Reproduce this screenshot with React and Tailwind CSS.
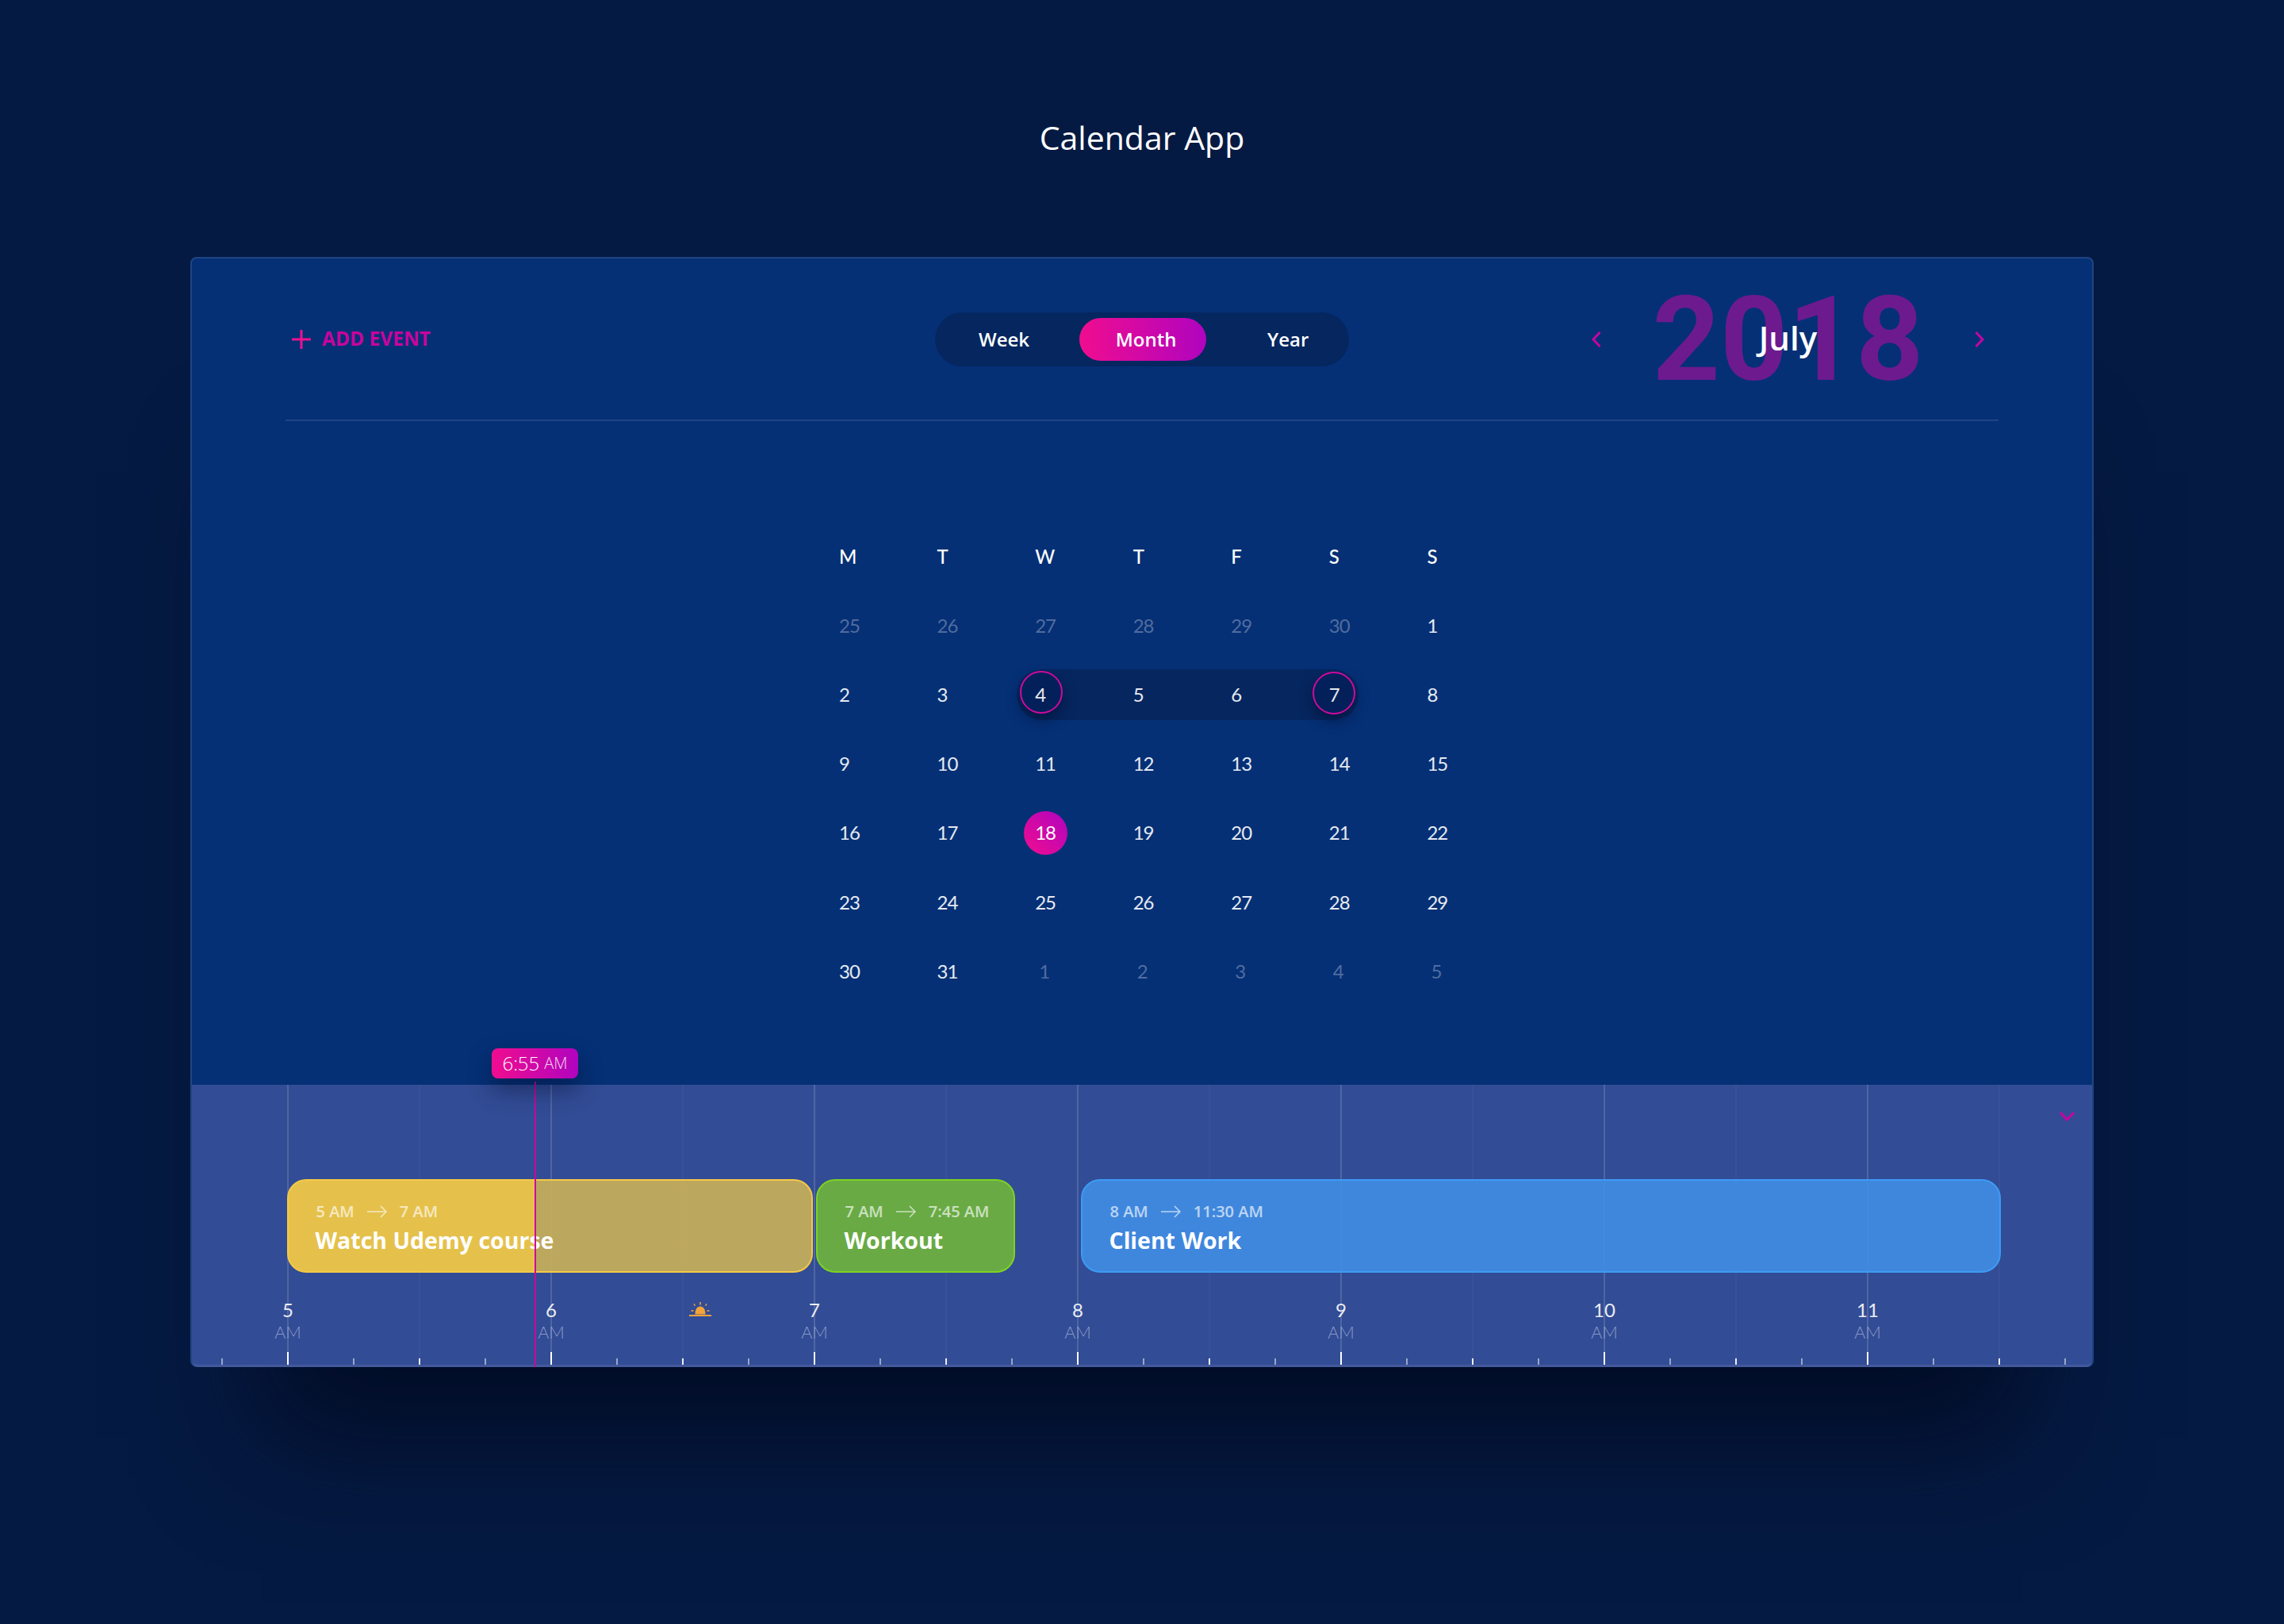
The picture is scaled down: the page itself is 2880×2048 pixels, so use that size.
const WEEKDAYS = ['M', 'T', 'W', 'T', 'F', 'S', 'S']

const DAYS = [
  [25, 1], [26, 1], [27, 1], [28, 1], [29, 1], [30, 1], [1, 0],
  [2, 0], [3, 0], [4, 0], [5, 0], [6, 0], [7, 0], [8, 0],
  [9, 0], [10, 0], [11, 0], [12, 0], [13, 0], [14, 0], [15, 0],
  [16, 0], [17, 0], [18, 0], [19, 0], [20, 0], [21, 0], [22, 0],
  [23, 0], [24, 0], [25, 0], [26, 0], [27, 0], [28, 0], [29, 0],
  [30, 0], [31, 0], [1, 1], [2, 1], [3, 1], [4, 1], [5, 1],
]

const HOURS = [5, 6, 7, 8, 9, 10, 11]

function Arrow() {
  return (
    <svg width="25" height="16" viewBox="0 0 25 16" fill="none" stroke="currentColor" strokeWidth="1.5">
      <path d="M0 8H24M17 1l7 7-7 7" />
    </svg>
  )
}

function Chevron({ d, box = '0 0 12 20', className }) {
  return (
    <svg className={className} viewBox={box} fill="none" stroke="#c704a2" strokeWidth="3">
      <path d={d} />
    </svg>
  )
}

function Sun() {
  return (
    <svg width="28" height="18" viewBox="0 0 28 18" fill="#f2a33a">
      <path d="M7.5 15.5C7.5 9 10 5.5 14 5.5s6.5 3.500 6.500 10z" />
      <rect x="0" y="16" width="28" height="2" />
      <rect x="13.2" y="0" width="1.6" height="3.5" />
      <path d="M5.4 2.600l1.300-.7 1.300 2.300-1.300.7zM22.600 2.600l-1.300-.7-1.300 2.300 1.300.7z" />
      <rect x="2.500" y="10.200" width="3" height="1.600" />
      <rect x="22.500" y="10.200" width="3" height="1.600" />
    </svg>
  )
}

function EventCard({ from, to, title, className }) {
  return (
    <div className={`h-[118px] shrink-0 rounded-[24px] border-2 pl-[33.5px] pt-[24px] text-white ${className}`}>
      <div className="flex items-center gap-[16px] pl-px text-[20px] font-semibold leading-[30px] text-white/65">
        <span>{from}</span>
        <Arrow />
        <span>{to}</span>
      </div>
      <div className="whitespace-nowrap text-[28.5px] font-bold leading-[42px]">{title}</div>
    </div>
  )
}

function Day({ day, muted, index }) {
  const isStart = index === 9
  const isEnd = index === 12
  const isToday = index === 23
  return (
    <div className={`relative flex items-center text-[24px] tracking-[-1px] ${muted ? 'text-[#516c9f]' : 'text-white/90'} ${index >= 37 ? 'pl-[5px]' : ''}`}>
      {isStart && <span className="absolute left-[-19px] top-[14px] h-[54px] w-[54px] rounded-full border-2 border-[#d00a9c] bg-[#04205a] shadow-[0_8px_16px_rgba(0,10,40,0.5)]" />}
      {isEnd && <span className="absolute left-[-21px] top-[15px] h-[54px] w-[54px] rounded-full border-2 border-[#d00a9c] bg-[#04205a] shadow-[0_8px_16px_rgba(0,10,40,0.5)]" />}
      {isToday && <span className="absolute left-[-14px] top-[16px] h-[55px] w-[55px] rounded-full bg-[linear-gradient(45deg,#f00d8f,#b004bf)]" />}
      <span className={`relative ${isToday ? 'text-white' : ''}`}>{day}</span>
    </div>
  )
}

export default function App() {
  return (
    <div className="h-[2048px] w-full overflow-hidden bg-[#051a42] font-['Open_Sans',sans-serif]">
      <h1 className="pt-[146px] text-center text-[41px] font-normal leading-[54px] text-white">Calendar App</h1>

      <div className="mx-auto mt-[124px] h-[1400px] w-[2400px] rounded-lg border-2 border-[#1f4584] bg-[#053076] shadow-[0_180px_140px_-90px_rgba(0,8,28,0.75)]">
        <div className="h-[1042px]">
          <header className="mx-[118px] grid h-[205px] grid-cols-3 items-center border-b-2 border-[#1f4584]">
            <button className="flex items-center gap-[14px] pl-[8px] text-[24.500px] font-bold text-[#c8049e]">
              <svg width="24" height="24" viewBox="0 0 24 24" stroke="#f0108f" strokeWidth="3">
                <path d="M12 0V24M0 12H24" />
              </svg>
              ADD EVENT
            </button>

            <div className="mx-auto flex h-[68px] w-[522px] items-center rounded-full bg-[#05265f] text-[24px] font-semibold text-white">
              <span className="mr-[8px] w-[174px] text-center">Week</span>
              <span className="flex h-[54px] w-[160px] items-center justify-center rounded-full bg-[linear-gradient(90deg,#f00d8f,#b004bf)] pl-[8px]">Month</span>
              <span className="ml-[77px]">Year</span>
            </div>

            <div className="relative ml-auto mr-[18px] flex w-[495px] items-center justify-between">
              <Chevron d="M10.5 1L2 10l8.5 9" className="h-[20px] w-[12px]" />
              <span className="absolute inset-x-0 top-1/2 -translate-y-1/2 text-center font-['Roboto',sans-serif] text-[149px] font-bold leading-none text-[#6d1a8f]">2018</span>
              <span className="relative -mt-[4px] text-[42px] font-semibold leading-[56px] text-white">July</span>
              <Chevron d="M1.500 1L10 10l-8.500 9" className="h-[20px] w-[12px]" />
            </div>
          </header>

          <div className="relative ml-[816px] mt-[127px] grid w-[865px] auto-rows-[87.2px] grid-cols-7 font-['Lato',sans-serif]">
            <div className="absolute left-[224px] top-[186px] h-[64px] w-[431px] rounded-full bg-[#06265f]" />
            {WEEKDAYS.map((d, i) => (
              <div key={i} className="relative flex items-center text-[24px] font-medium text-white">{d}</div>
            ))}
            {DAYS.map(([day, muted], i) => (
              <Day key={i} day={day} muted={muted} index={i} />
            ))}
          </div>
        </div>

        <div className="relative h-[356px] rounded-b-lg border-b-[3px] border-[#43599d] bg-[#324c95]">
          <div className="absolute inset-0 flex overflow-hidden pl-[120px]">
            {[...Array(14)].map((_, i) => (
              <div key={i} className={`h-full w-[166px] shrink-0 border-l-2 ${i % 2 === 0 ? 'border-white/15' : 'border-white/[0.03]'}`} />
            ))}
          </div>

          <div className="absolute left-[378px] top-[-46px] z-20 flex h-[38px] w-[109px] items-center justify-center gap-[6px] rounded-lg bg-[linear-gradient(90deg,#f00d8f,#b004bf)] text-white shadow-[0_14px_30px_rgba(0,10,40,0.45)]">
            <span className="text-[24px] font-light">6:55</span>
            <span className="text-[20px] font-light opacity-80">AM</span>
          </div>
          <div className="absolute bottom-[-3px] left-[432px] top-[-4px] z-10 w-[2px] bg-[#cc069e]" />

          <Chevron d="M1 1l8.500 9 8.500-9" box="0 0 19 12" className="absolute right-[22px] top-[34px] h-[12px] w-[19px]" />

          <div className="relative flex pl-[120px] pt-[119px]">
            <EventCard from="5 AM" to="7 AM" title="Watch Udemy course" className="w-[663px] border-[#f5c945] bg-[linear-gradient(90deg,#e5c14c_310px,rgba(203,177,88,0.9)_310px)]" />
            <EventCard from="7 AM" to="7:45 AM" title="Workout" className="ml-[4px] w-[251px] border-[#7ed321] bg-[#69aa45]" />
            <EventCard from="8 AM" to="11:30 AM" title="Client Work" className="ml-[83px] w-[1160px] border-[#3d9bf5] bg-[#408ee4]/90" />
          </div>

          <div className="relative mt-[31px] flex pl-[121px] font-['Lato',sans-serif]">
            {HOURS.map((h) => (
              <div key={h} className="relative w-[332px] shrink-0">
                <div className="flex w-0 flex-col items-center">
                  <span className="text-[24px] leading-[31px] text-white/90">{h}</span>
                  <span className="text-[21.500px] font-light leading-[26px] text-[#8a9bc8]">AM</span>
                </div>
                {h === 6 && (
                  <div className="absolute left-[174px] top-[6px]"><Sun /></div>
                )}
              </div>
            ))}
          </div>

          <div className="absolute bottom-0 left-[37px] flex h-[16px] items-end">
            {[...Array(29)].map((_, i) => (
              <div key={i} className="w-[83px] shrink-0">
                {i % 4 === 1 && <div className="h-[16px] w-[2px] bg-white" />}
                {i % 4 === 3 && <div className="h-[8px] w-[2px] bg-white/90" />}
                {i % 2 === 0 && <div className="h-[8px] w-[2px] bg-white/50" />}
              </div>
            ))}
          </div>
        </div>
      </div>
    </div>
  )
}
